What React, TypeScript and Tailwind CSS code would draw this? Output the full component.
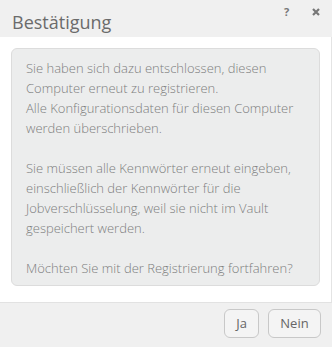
export default function App() {
  return (
    <div
      className="flex h-[347px] w-[332px] flex-col bg-white"
      style={{ fontFamily: '"Open Sans", "Liberation Sans", sans-serif' }}
    >
      <div className="relative h-[37px] shrink-0 bg-[#f0f0f0]">
        <p className="pl-[12px] pt-[10px] text-[18px] leading-[24px] text-[#6b6b6b]">Bestätigung</p>
        <span className="absolute left-[284px] top-[4px] text-[11px] font-bold leading-[16px] text-[#777]">?</span>
        <svg className="absolute left-[312px] top-[8px]" width="8" height="8" viewBox="0 0 8 8">
          <path d="M1 1 L7 7 M7 1 L1 7" stroke="#777" strokeWidth="2.2" strokeLinecap="butt" />
        </svg>
      </div>

      <div className="flex-1 border-r border-[#e4e4e4] px-[11px] pt-[11px]">
        <div className="rounded-[6px] border border-[#dcdcdc] bg-[#eceded] pb-[7px] pl-[14px] pr-[10px] pt-[9px] text-[13px] leading-[20px] font-light text-[#7d7d7d]">
          <p>
            Sie haben sich dazu entschlossen, diesen
            <br />
            Computer erneut zu registrieren.
            <br />
            Alle Konfigurationsdaten für diesen Computer
            <br />
            werden überschrieben.
          </p>
          <p className="mt-[20px]">
            Sie müssen alle Kennwörter erneut eingeben,
            <br />
            einschließlich der Kennwörter für die
            <br />
            Jobverschlüsselung, weil sie nicht im Vault
            <br />
            gespeichert werden.
          </p>
          <p className="mt-[20px]">Möchten Sie mit der Registrierung fortfahren?</p>
        </div>
      </div>

      <div className="flex h-[45px] shrink-0 items-start justify-end gap-[9px] border-t border-[#e2e2e2] bg-[#f0f0f0] pr-[11px] pt-[6px]">
        <button className="h-[29px] w-[35px] rounded-[6px] border border-[#c8c8c8] bg-[#f4f4f4] text-[13px] text-[#666]">
          Ja
        </button>
        <button className="h-[29px] w-[53px] rounded-[6px] border border-[#c8c8c8] bg-[#f4f4f4] text-[13px] text-[#666]">
          Nein
        </button>
      </div>
    </div>
  );
}
